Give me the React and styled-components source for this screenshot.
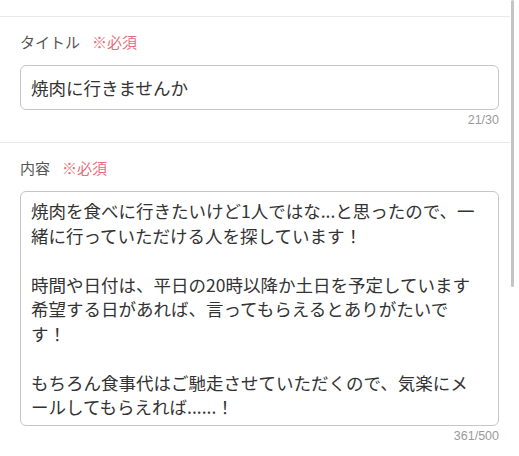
import React from "react";
import styled, { createGlobalStyle } from "styled-components";

const GlobalStyle = createGlobalStyle`
  html, body {
    margin: 0;
    padding: 0;
    background: #fff;
  }
  body {
    font-family: "Noto Sans CJK JP", "Noto Sans", sans-serif;
    color: #333;
  }
`;

const body = `焼肉を食べに行きたいけど1人ではな...と思ったので、一
緒に行っていただける人を探しています！

時間や日付は、平日の20時以降か土日を予定しています
希望する日があれば、言ってもらえるとありがたいで
す！

もちろん食事代はご馳走させていただくので、気楽にメ
ールしてもらえれば......！`;

const App = () => {
  return (
    <Page>
      <GlobalStyle />
      <TopStrip />
      <Section>
        <Label>
          タイトル<Required>※必須</Required>
        </Label>
        <TitleInput type="text" value="焼肉に行きませんか" readOnly />
        <Counter>21/30</Counter>
      </Section>
      <Section last>
        <Label>
          内容<Required>※必須</Required>
        </Label>
        <BodyInput value={body} readOnly wrap="off" />
        <Counter>361/500</Counter>
      </Section>
      <ScrollThumb />
    </Page>
  );
};

const Page = styled.div`
  position: relative;
  width: 519px;
  height: 456px;
  overflow: hidden;
  padding-right: 9px;
  box-sizing: border-box;
`;

const TopStrip = styled.div`
  height: 16px;
  border-bottom: 1px solid #e9e9e9;
`;

const Section = styled.section`
  display: flex;
  flex-direction: column;
  padding: 15px 11px 15px 20px;
  border-bottom: ${(props) => (props.last ? "none" : "1px solid #e9e9e9")};
`;

const Label = styled.div`
  display: flex;
  align-items: center;
  gap: 12px;
  font-size: 15px;
  line-height: 20px;
  color: #555;
  margin-bottom: 13px;
`;

const Required = styled.span`
  color: #e5707b;
  font-size: 15px;
`;

const TitleInput = styled.input`
  box-sizing: border-box;
  width: 100%;
  height: 45px;
  padding: 0 10px;
  border: 1px solid #c6c6c6;
  border-radius: 6px;
  font-family: inherit;
  font-size: 17.5px;
  color: #333;
  background: #fff;
  outline: none;
`;

const BodyInput = styled.textarea`
  box-sizing: border-box;
  width: 100%;
  height: 235px;
  padding: 7px 10px;
  border: 1px solid #c6c6c6;
  border-radius: 6px;
  font-family: inherit;
  font-size: 17.5px;
  line-height: 24.5px;
  color: #333;
  background: #fff;
  resize: none;
  overflow: hidden;
  white-space: pre;
  outline: none;
`;

const Counter = styled.div`
  margin-top: 3px;
  text-align: right;
  font-family: "Liberation Sans", Arial, sans-serif;
  font-size: 12.5px;
  line-height: 14px;
  color: #9a9a9a;
`;

const ScrollThumb = styled.div`
  position: absolute;
  top: 0;
  right: 5px;
  width: 3px;
  height: 287px;
  border-radius: 2px;
  background: #c4c4c4;
`;

export default App;
